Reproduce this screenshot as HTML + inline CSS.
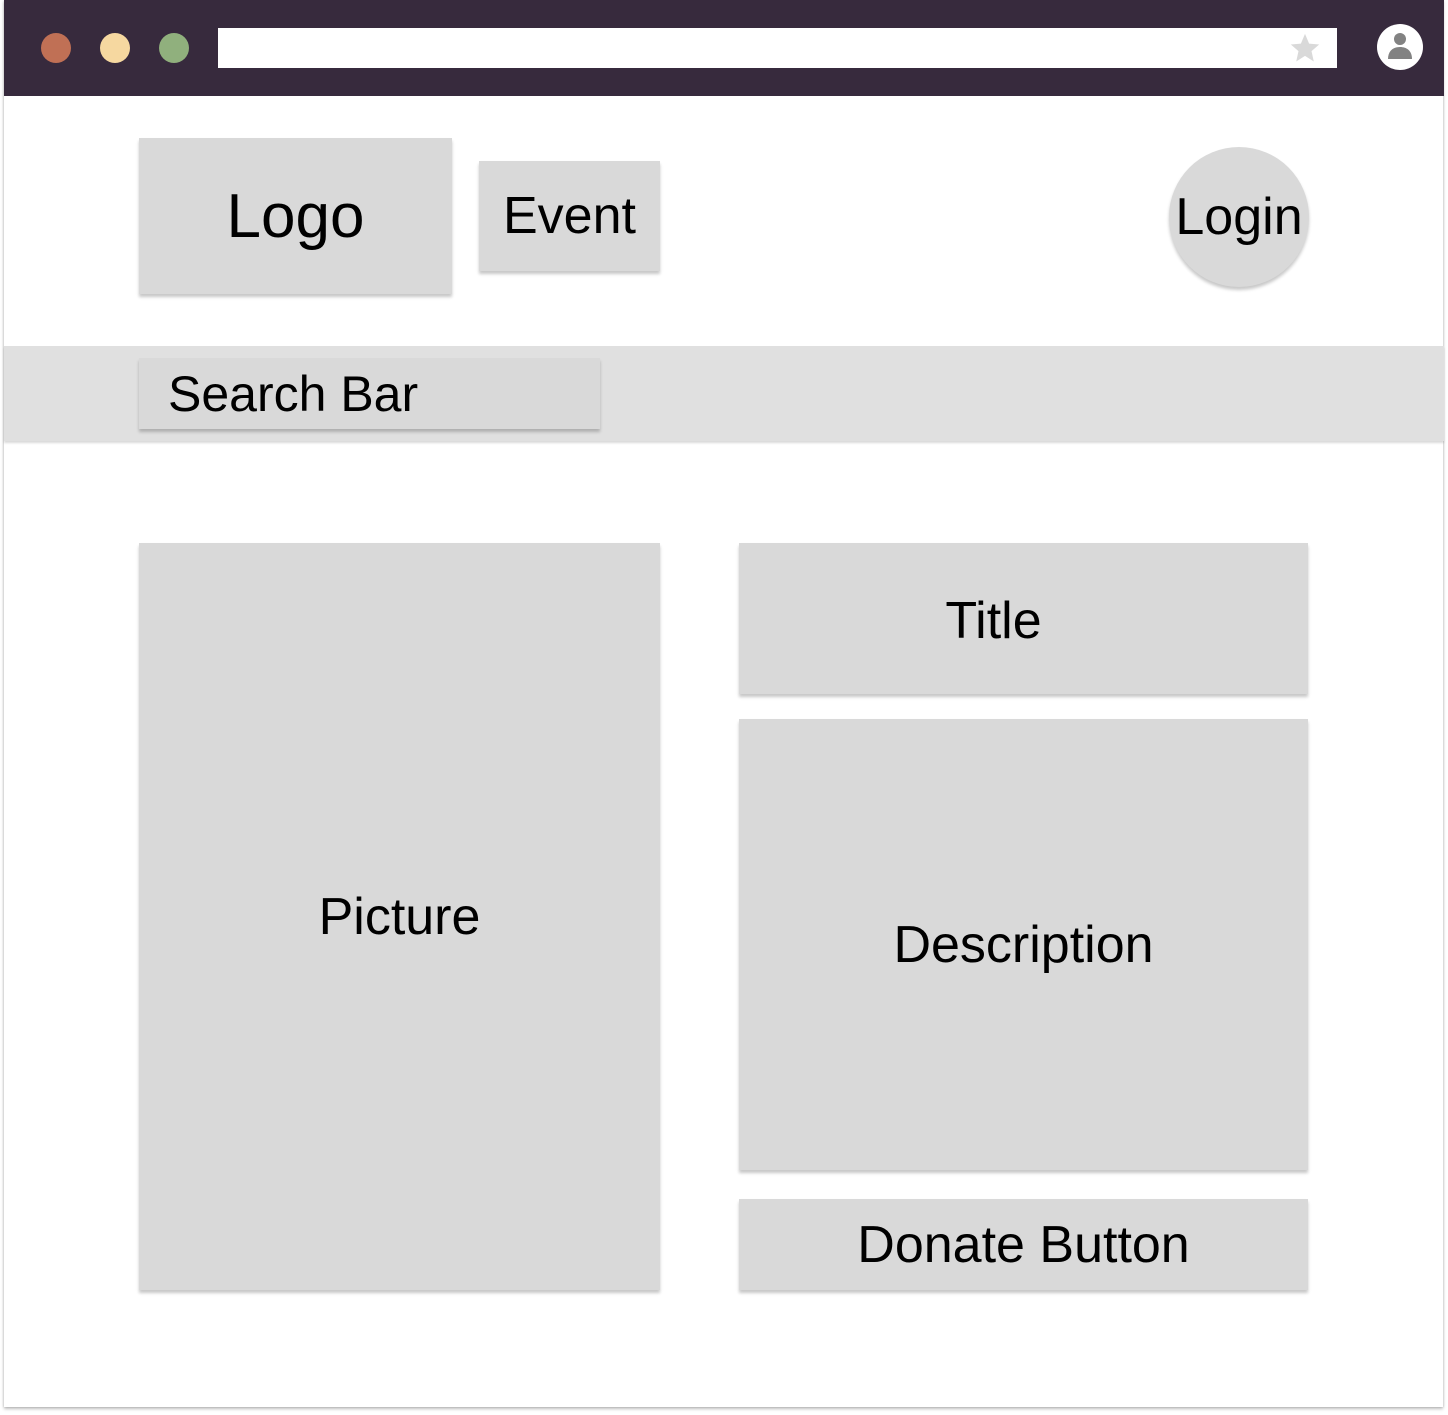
<!DOCTYPE html>
<html><head><meta charset="utf-8"><style>
html,body{margin:0;padding:0;background:#fff;}
body{width:1448px;height:1415px;position:relative;overflow:hidden;font-family:"Liberation Sans",sans-serif;color:#000;}
.frame{position:absolute;left:4px;top:0;width:1439px;height:1407px;background:#fff;box-shadow:0 2px 3px rgba(0,0,0,0.25),-1px 0 2px rgba(0,0,0,0.08),1px 0 2px rgba(0,0,0,0.08);}
.top{position:absolute;left:4px;top:0;width:1440px;height:96px;background:#372a3d;}
.dot{position:absolute;width:30px;height:30px;border-radius:50%;top:33px;}
.addr{position:absolute;left:218px;top:28px;width:1119px;height:40px;background:#fff;}
.b{position:absolute;background:#d9d9d9;box-shadow:0 3px 3px rgba(0,0,0,0.22);display:flex;align-items:center;justify-content:center;font-size:52px;white-space:nowrap;}
.band{position:absolute;left:4px;top:346px;width:1440px;height:95px;background:#e0e0e0;box-shadow:0 2px 2px rgba(0,0,0,0.15);}
</style></head><body>
<div class="frame"></div>
<div class="top"></div>
<div class="dot" style="left:41px;background:#c07055"></div>
<div class="dot" style="left:100px;background:#f6d8a0"></div>
<div class="dot" style="left:159px;background:#90b07d"></div>
<div class="addr"></div>
<svg style="position:absolute;left:1288px;top:31px" width="34" height="34" viewBox="0 0 24 24"><path d="M12 2l2.9 6.9 7.1.6-5.4 4.7 1.6 7.3L12 17.6 5.8 21.5l1.6-7.3L2 9.5l7.1-.6z" fill="#d9d9d9"/></svg>
<svg style="position:absolute;left:1376px;top:23px" width="48" height="48" viewBox="0 0 48 48"><circle cx="24" cy="24" r="23" fill="#fff"/><circle cx="24" cy="16" r="6" fill="#828282"/><path d="M12 36c0-8 5-12 12-12s12 4 12 12z" fill="#828282"/></svg>
<div class="b" style="left:139px;top:138px;width:313px;height:156px;font-size:62px">Logo</div>
<div class="b" style="left:479px;top:161px;width:181px;height:110px">Event</div>
<div class="b" style="left:1169px;top:147px;width:140px;height:140px;border-radius:50%;">Login</div>
<div class="band"></div>
<div class="b" style="left:139px;top:358px;width:461px;height:71px;justify-content:flex-start;padding-left:29px;box-sizing:border-box;font-size:50px">Search Bar</div>
<div class="b" style="left:139px;top:543px;width:521px;height:747px">Picture</div>
<div class="b" style="left:739px;top:543px;width:569px;height:151px"><span style="position:relative;left:-30px;top:2px">Title</span></div>
<div class="b" style="left:739px;top:719px;width:569px;height:451px">Description</div>
<div class="b" style="left:739px;top:1199px;width:569px;height:91px">Donate Button</div>
</body></html>
